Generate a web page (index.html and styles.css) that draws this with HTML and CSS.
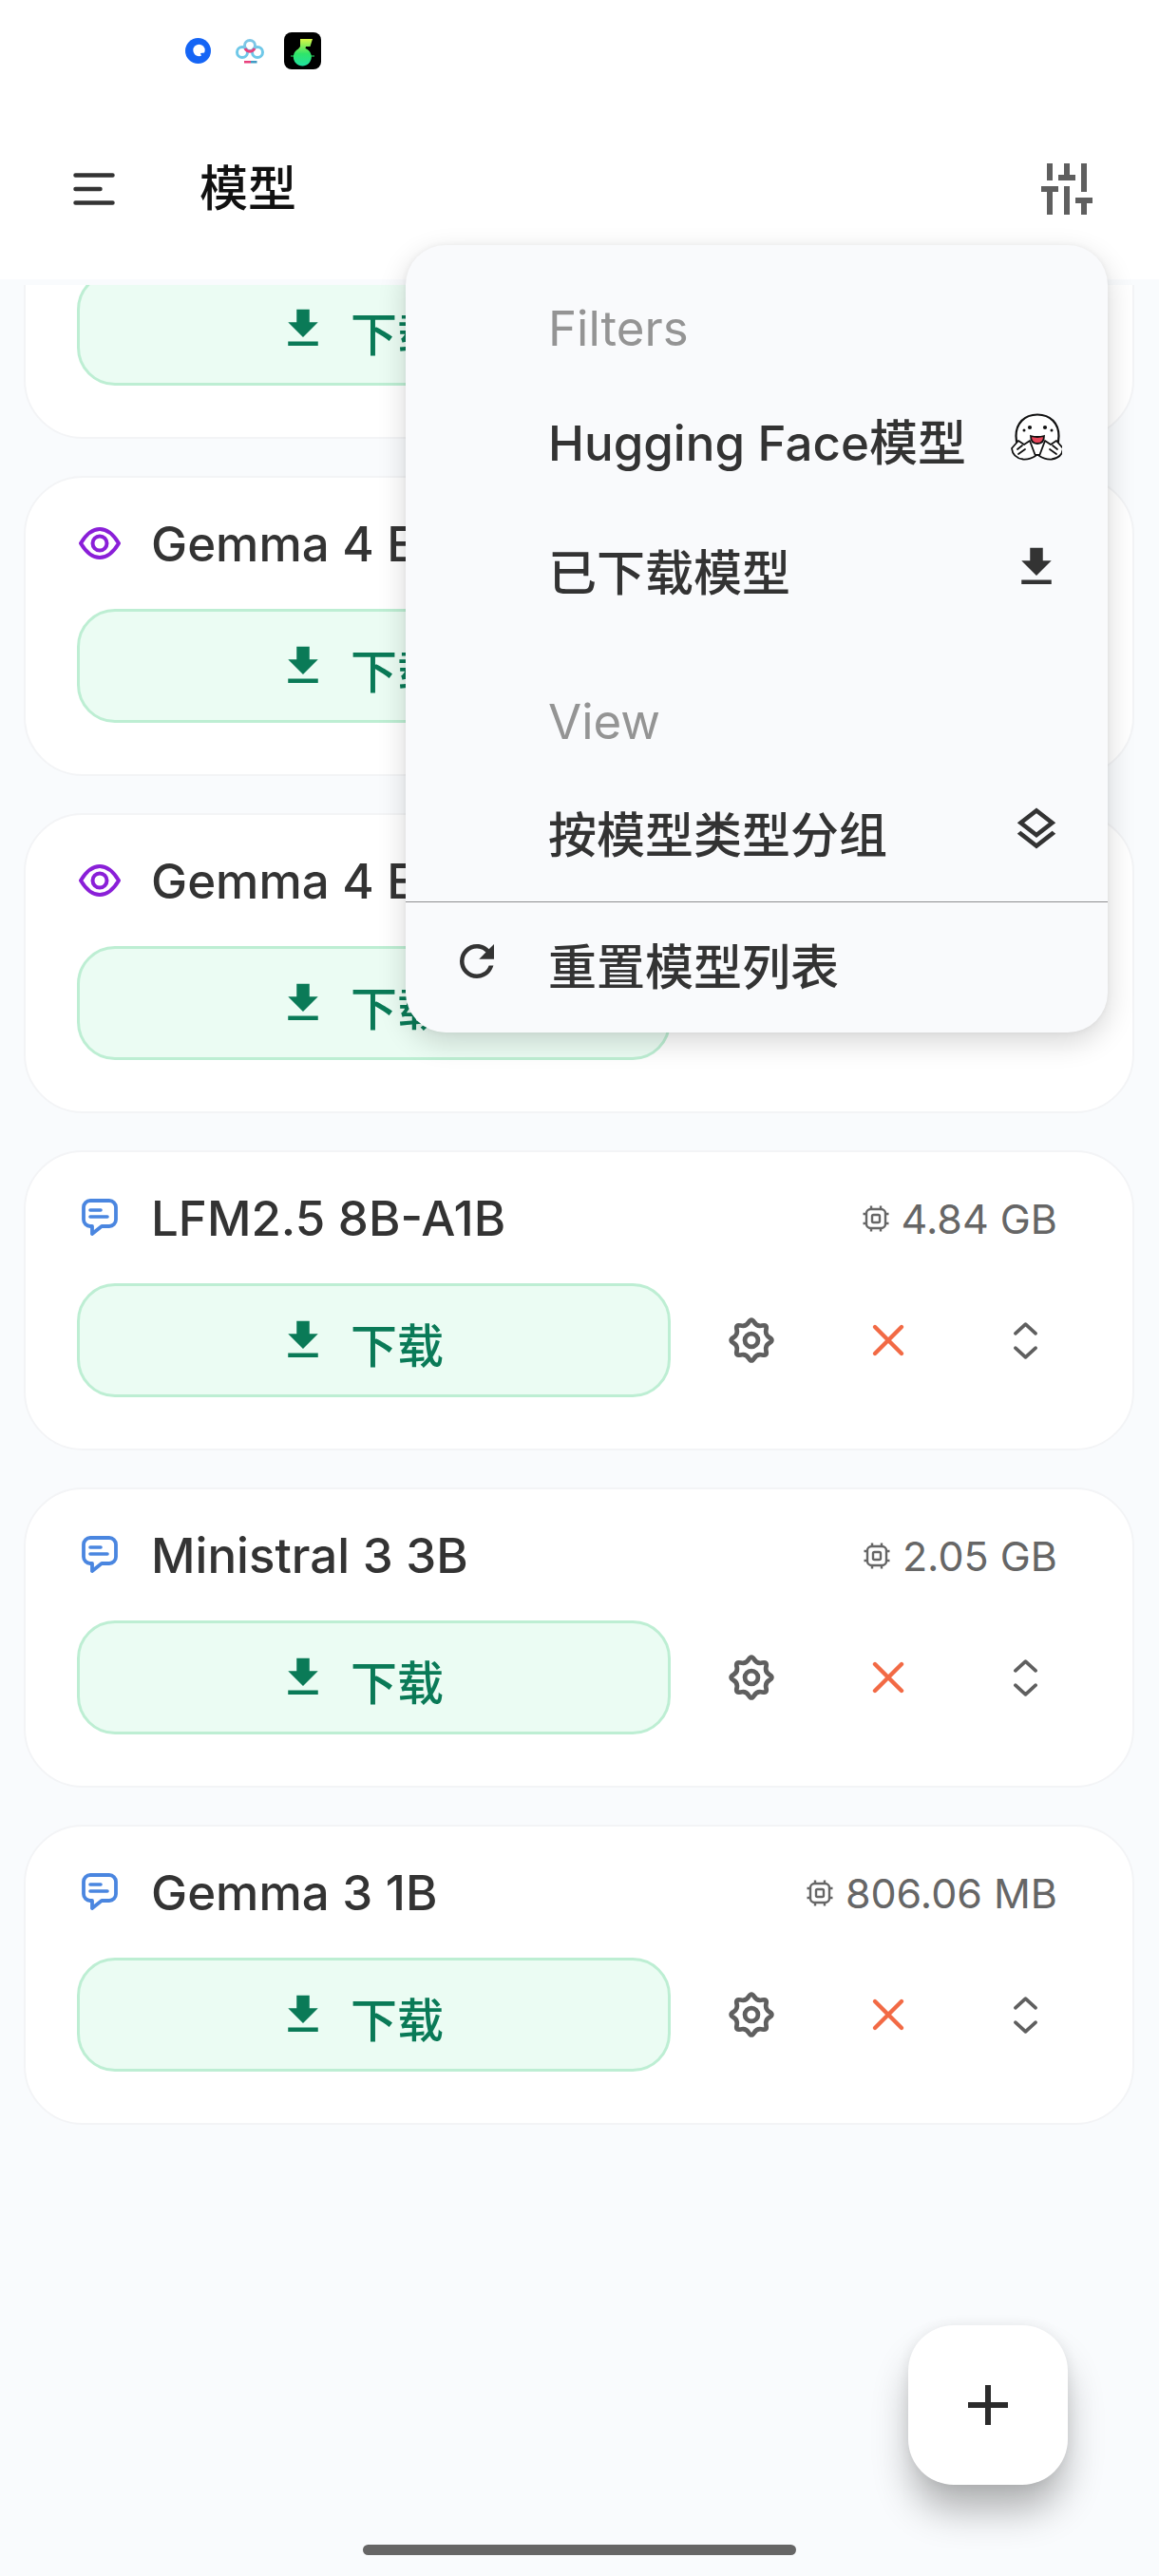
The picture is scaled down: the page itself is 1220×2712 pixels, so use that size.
FILE: index.html
```html
<!DOCTYPE html>
<html lang="zh">
<head>
<meta charset="utf-8">
<title>模型</title>
<link rel="stylesheet" href="styles.css">
</head>
<body>
<svg class="defs" width="0" height="0" aria-hidden="true">
  <symbol id="i-download" viewBox="0 0 24 24"><path fill="currentColor" d="M5,20H19V18H5M19,9H15V3H9V9H5L12,16L19,9Z"/></symbol>
  <symbol id="i-chat" viewBox="0 0 40 42"><path fill="none" stroke="currentColor" stroke-width="3.8" stroke-linejoin="round" d="M10 3H30a7 7 0 0 1 7 7V23a7 7 0 0 1-7 7H22L12 38V30H10a7 7 0 0 1-7-7V10a7 7 0 0 1 7-7Z"/><path fill="none" stroke="currentColor" stroke-width="3.6" stroke-linecap="round" d="M10 13H21M10 20H28"/></symbol>
  <symbol id="i-eye" viewBox="0 0 44 34"><path fill="none" stroke="currentColor" stroke-width="4" stroke-linejoin="round" d="M2 17C8 7 15 2 22 2C29 2 36 7 42 17C36 27 29 32 22 32C15 32 8 27 2 17Z"/><circle cx="22" cy="17" r="7.5" fill="none" stroke="currentColor" stroke-width="4"/></symbol>
  <symbol id="i-chip" viewBox="0 0 30 30"><g fill="none" stroke="currentColor" stroke-width="2.4"><rect x="5" y="5" width="20" height="20" rx="4.5"/><rect x="11" y="11" width="8" height="8" rx="1.5"/><path d="M10 1.5V5M20 1.5V5M10 25V28.5M20 25V28.5M1.5 10H5M1.5 20H5M25 10H28.5M25 20H28.5"/></g></symbol>
  <symbol id="i-gear" viewBox="0 0 24 24"><path fill="none" stroke="currentColor" stroke-width="2.2" stroke-linejoin="round" d="M20.73 13.34Q18.47 14.68 19.13 17.23Q19.78 19.78 17.23 19.13Q14.68 18.47 13.34 20.73Q12 23 10.66 20.73Q9.32 18.47 6.77 19.13Q4.22 19.78 4.87 17.23Q5.53 14.68 3.27 13.34Q1 12 3.27 10.66Q5.53 9.32 4.87 6.77Q4.22 4.22 6.77 4.87Q9.32 5.53 10.66 3.27Q12 1 13.34 3.27Q14.68 5.53 17.23 4.87Q19.78 4.22 19.13 6.77Q18.47 9.32 20.73 10.66Q23 12 20.73 13.34Z"/><circle cx="12" cy="12" r="3.2" fill="none" stroke="currentColor" stroke-width="2.2"/></symbol>
  <symbol id="i-x" viewBox="0 0 36 36"><path fill="none" stroke="currentColor" stroke-width="4.4" stroke-linecap="round" d="M4 4L32 32M32 4L4 32"/></symbol>
  <symbol id="i-updown" viewBox="0 0 30 42"><path fill="none" stroke="currentColor" stroke-width="3.8" stroke-linecap="round" stroke-linejoin="round" d="M4 13L15 3L26 13M4 29L15 39L26 29"/></symbol>
</svg>

<header class="top">
  <div class="status">
    <svg class="app-icon" viewBox="0 0 40 40"><circle cx="19.500" cy="19.500" r="13.500" fill="#1565f5"/><circle cx="20.500" cy="19" r="6.200" fill="#fff"/><path d="M22 22l4.500-.5-3 5z" fill="#1565f5"/></svg>
    <svg class="app-icon" viewBox="0 0 40 40"><g fill="none" stroke-width="3"><circle cx="11" cy="21" r="5.500" stroke="#6fc8e8"/><circle cx="27" cy="21" r="5.500" stroke="#6fc8e8"/><circle cx="19" cy="14" r="5.500" stroke="#7cc6e6"/><path d="M14 17a5.500 5.500 0 0 0 10 0" stroke="#e8407c"/></g><rect x="13" y="30" width="7" height="2.500" fill="#e8407c"/><rect x="20" y="30" width="6.500" height="2.500" fill="#3f9ac4"/></svg>
    <svg class="app-icon" viewBox="0 0 40 40"><defs><linearGradient id="note" x1="0" y1="0" x2="0" y2="1"><stop offset="0" stop-color="#d9f545"/><stop offset=".55" stop-color="#2fe56a"/><stop offset="1" stop-color="#20e0a0"/></linearGradient></defs><rect x="0" y="0" width="39" height="39" rx="8" fill="#000"/><path fill="url(#note)" d="M17 7H30L27.500 15H23L22.500 17A9.500 9.500 0 1 1 15 17.500L17 15Z"/><path d="M7 25H13M26 25H32" stroke="#2fe56a" stroke-width="1"/></svg>
  </div>
  <div class="appbar">
    <svg class="burger" viewBox="0 0 44 34"><path fill="none" stroke="#333" stroke-width="4.500" stroke-linecap="round" d="M2.500 2.500H41.500M2.500 17H28.500M2.500 31.500H41.500"/></svg>
    <h1 class="page-title">模型</h1>
    <svg class="sliders" viewBox="0 0 18 18"><path fill="#5f5f5f" d="M2 0h2v6H2zM0 8h6v2H4v8H2v-8H0zM8 0h2v4h2v2H6V4h2zM8 8h2v10H8zM14 0h2v10h-2zM12 12h6v2h-2v4h-2v-4h-2z"/></svg>
  </div>
</header>

<main class="list">
  <article class="card first">
    <div class="card-head"></div>
    <div class="card-actions">
      <button class="dl"><svg class="ic54"><use href="#i-download"/></svg><span class="dl-text">下载</span></button>
    </div>
  </article>
  <article class="card">
    <div class="card-head"><svg class="type-icon eye"><use href="#i-eye"/></svg><span class="name">Gemma 4 E</span></div>
    <div class="card-actions">
      <button class="dl"><svg class="ic54"><use href="#i-download"/></svg><span class="dl-text">下载</span></button>
    </div>
  </article>
  <article class="card">
    <div class="card-head"><svg class="type-icon eye"><use href="#i-eye"/></svg><span class="name">Gemma 4 E</span></div>
    <div class="card-actions">
      <button class="dl"><svg class="ic54"><use href="#i-download"/></svg><span class="dl-text">下载</span></button>
    </div>
  </article>
  <article class="card">
    <div class="card-head"><svg class="type-icon chat"><use href="#i-chat"/></svg><span class="name">LFM2.5 8B-A1B</span><span class="size"><svg class="chip"><use href="#i-chip"/></svg>4.84 GB</span></div>
    <div class="card-actions">
      <button class="dl"><svg class="ic54"><use href="#i-download"/></svg><span class="dl-text">下载</span></button>
      <span class="act"><svg class="gear"><use href="#i-gear"/></svg></span>
      <span class="act"><svg class="x"><use href="#i-x"/></svg></span>
      <span class="act"><svg class="updown"><use href="#i-updown"/></svg></span>
    </div>
  </article>
  <article class="card">
    <div class="card-head"><svg class="type-icon chat"><use href="#i-chat"/></svg><span class="name">Ministral 3 3B</span><span class="size"><svg class="chip"><use href="#i-chip"/></svg>2.05 GB</span></div>
    <div class="card-actions">
      <button class="dl"><svg class="ic54"><use href="#i-download"/></svg><span class="dl-text">下载</span></button>
      <span class="act"><svg class="gear"><use href="#i-gear"/></svg></span>
      <span class="act"><svg class="x"><use href="#i-x"/></svg></span>
      <span class="act"><svg class="updown"><use href="#i-updown"/></svg></span>
    </div>
  </article>
  <article class="card">
    <div class="card-head"><svg class="type-icon chat"><use href="#i-chat"/></svg><span class="name">Gemma 3 1B</span><span class="size"><svg class="chip"><use href="#i-chip"/></svg>806.06 MB</span></div>
    <div class="card-actions">
      <button class="dl"><svg class="ic54"><use href="#i-download"/></svg><span class="dl-text">下载</span></button>
      <span class="act"><svg class="gear"><use href="#i-gear"/></svg></span>
      <span class="act"><svg class="x"><use href="#i-x"/></svg></span>
      <span class="act"><svg class="updown"><use href="#i-updown"/></svg></span>
    </div>
  </article>
</main>

<aside class="menu">
  <div class="menu-label">Filters</div>
  <div class="menu-row"><span class="lead"></span><span class="menu-text">Hugging Face模型</span>
    <svg class="ic54 hf" viewBox="0 0 54 50">
      <path d="M28 1.500C14 1.500 5.500 11 5.500 24C5.500 33 9 40 14 44H42C47 40 50.500 33 50.500 24C50.500 11 42 1.500 28 1.500Z" fill="#fff" stroke="#111" stroke-width="2.200"/>
      <circle cx="14" cy="18" r="1.500" fill="#111"/><circle cx="20" cy="15" r="2.100" fill="#111"/><circle cx="36" cy="15" r="2.100" fill="#111"/><circle cx="43" cy="18" r="1.500" fill="#111"/>
      <path d="M21 24Q28 26 35 24Q35 32 28 32Q21 32 21 24Z" fill="#e8465a" stroke="#111" stroke-width="1.800"/>
      <g fill="#fff" stroke="#111" stroke-width="1.800" stroke-linejoin="round" stroke-linecap="round">
        <path d="M1 37L8 29L14 33L20 29L26 45Q20 49 13 48.500Q2 47 1 37Z"/><path d="M7 38L12 34M8 43L15 38"/>
        <path d="M55 37L48 29L42 33L36 29L30 45Q36 49 43 48.500Q54 47 55 37Z"/><path d="M49 38L44 34M48 43L41 38"/>
      </g>
    </svg>
  </div>
  <div class="menu-row"><span class="lead"></span><span class="menu-text">已下载模型</span><svg class="ic54"><use href="#i-download"/></svg></div>
  <div class="menu-label view">View</div>
  <div class="menu-row"><span class="lead"></span><span class="menu-text">按模型类型分组</span><svg class="ic54" viewBox="0 0 24 24"><path fill="currentColor" d="M12,18.54L19.37,12.8L21,14.07L12,21.07L3,14.07L4.62,12.81L12,18.54M12,16L3,9L12,2L21,9L12,16M12,4.53L6.26,9L12,13.47L17.74,9L12,4.53Z"/></svg></div>
  <div class="menu-divider"></div>
  <div class="menu-row reset"><span class="lead"><svg class="ic54" viewBox="0 0 24 24"><path fill="currentColor" d="M17.65,6.35C16.2,4.9 14.21,4 12,4A8,8 0 0,0 4,12A8,8 0 0,0 12,20C15.73,20 18.84,17.45 19.73,14H17.65C16.83,16.33 14.61,18 12,18A6,6 0 0,1 6,12A6,6 0 0,1 12,6C13.66,6 15.14,6.69 16.22,7.78L13,11H20V4L17.65,6.35Z"/></svg></span><span class="menu-text">重置模型列表</span></div>
</aside>

<button class="fab"><svg class="plus" viewBox="0 0 42 42"><path fill="#2b2b2b" d="M18 0h6v18h18v6H24v18h-6V24H0v-6h18z"/></svg></button>
<div class="home-bar"></div>
</body>
</html>
```
FILE: styles.css
```css
* { box-sizing: border-box; }
html, body { margin: 0; padding: 0; }
body {
  width: 1220px;
  height: 2712px;
  overflow: hidden;
  position: relative;
  display: flex;
  flex-direction: column;
  background: #f9fbfd;
  font-family: "Inter", "Noto Sans CJK SC", sans-serif;
  color: #333;
}
.defs { position: absolute; }

/* top */
.top { background: #fff; height: 294px; flex: none; }
.status { height: 110px; padding: 34px 0 0 189px; display: flex; gap: 15px; align-items: flex-start; }
.app-icon { width: 40px; height: 40px; }
.appbar { height: 178px; display: flex; align-items: center; padding: 0 70px 0 77px; }
.burger { width: 44px; height: 34px; flex: none; }
.page-title { margin: 0 0 0 89px; font-size: 51px; font-weight: 500; color: #111; line-height: 60px; flex: 1; }
.sliders { width: 54px; height: 54px; flex: none; }

/* list */
.list { flex: 1; margin-top: 6px; overflow: hidden; padding: 0 26px 0 25px; display: flex; flex-direction: column; gap: 39px; }
.card {
  flex: none;
  height: 316px;
  background: #fff;
  border: 2px solid #f3f4f6;
  border-radius: 62px;
  padding: 0 43px 0 54px;
}
.card.first { margin-top: -154px; }
.card-head { height: 138px; display: flex; align-items: center; padding: 0 36px 0 4px; }
.type-icon { width: 40px; height: 42px; flex: none; }
.type-icon.chat { color: #4a86e0; }
.type-icon.eye { color: #8a1fd8; width: 44px; height: 34px; margin-left: -2px; }
.name { margin-left: 34px; font-size: 51px; font-weight: 450; color: #333; flex: 1; white-space: nowrap; }
.type-icon.eye + .name { margin-left: 32px; }
.size { display: flex; align-items: center; font-size: 43px; line-height: 54px; padding-top: 2px; color: #666; white-space: nowrap; }
.chip { width: 30px; height: 30px; margin-right: 12px; color: #666; }
.card-actions { display: flex; align-items: center; }
.dl {
  width: 625px;
  height: 120px;
  flex: none;
  border: 3px solid #bdeed3;
  border-radius: 40px;
  background: #ebfcf3;
  color: #0a7a57;
  display: flex;
  align-items: center;
  justify-content: center;
  padding: 0 28px 0 0;
  font: inherit;
}
.ic54 { width: 54px; height: 54px; flex: none; display: block; }
.dl-text { font-size: 49px; font-weight: 500; margin-left: 23px; padding-top: 13px; line-height: 60px; }
.card-actions .act:first-of-type { margin-left: 13px; }
.act { width: 144px; height: 120px; flex: none; display: flex; align-items: center; justify-content: center; color: #5f5f5f; }
.gear { width: 52px; height: 52px; }
.x { width: 36px; height: 36px; color: #f26a45; }
.updown { width: 29px; height: 41px; }

/* menu */
.menu {
  position: absolute;
  left: 427px;
  top: 258px;
  width: 739px;
  height: 829px;
  background: #f9fafc;
  border-radius: 42px;
  padding-top: 48px;
  box-shadow: 0 10px 30px rgba(0, 0, 0, .16), 0 0 6px rgba(0, 0, 0, .05);
  color: #333;
}
.menu-label { height: 80px; line-height: 80px; padding-left: 150px; font-size: 51px; color: #949494; margin-bottom: 5px; }
.menu-label.view { margin: 55px 0 4px; }
.menu-row { height: 137px; display: flex; align-items: center; padding-right: 48px; }
.lead { width: 150px; flex: none; padding-left: 48px; }
.menu-text { flex: 1; font-size: 51px; font-weight: 500; line-height: 60px; padding-top: 14px; white-space: nowrap; }
.menu-divider { height: 1px; background: #8e8e90; margin-top: 8px; }
.menu-row.reset { height: 123px; }

/* fab */
.fab {
  position: absolute;
  left: 956px;
  top: 2448px;
  width: 168px;
  height: 168px;
  border: 0;
  border-radius: 48px;
  background: #fff;
  display: flex;
  align-items: center;
  justify-content: center;
  padding: 0;
  box-shadow: 0 30px 40px -4px rgba(0, 0, 0, .3), 0 0 14px rgba(0, 0, 0, .07);
}
.plus { width: 42px; height: 42px; }
.home-bar { position: absolute; left: 382px; top: 2679px; width: 456px; height: 11px; border-radius: 6px; background: #666; }
```
